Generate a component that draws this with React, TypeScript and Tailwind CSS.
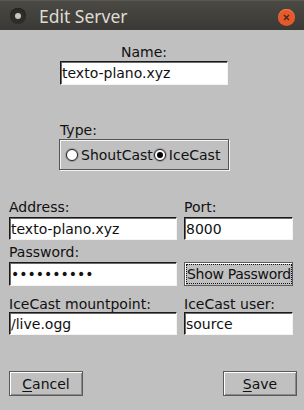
import React from "react";

const font = { fontFamily: '"DejaVu Sans", sans-serif' };

function Entry({ value, className = "" }: { value: string; className?: string }) {
  return (
    <div
      className={
        "flex items-center bg-white border border-t-[#1a1a1a] border-l-[#1a1a1a] border-r-[#f4f4f4] border-b-[#f4f4f4] shadow-[inset_1px_1px_0_#6a6a6a] pl-[1px] text-[14px] leading-[16px] text-[#111] overflow-hidden whitespace-nowrap " +
        className
      }
    >
      {value}
    </div>
  );
}

function Radio({ checked }: { checked: boolean }) {
  return (
    <span className="w-[12px] h-[12px] rounded-full bg-white border border-[#222] shadow-[0_0_0_1px_#9a9a9a] flex items-center justify-center shrink-0">
      {checked && <span className="w-[6px] h-[6px] rounded-full bg-black" />}
    </span>
  );
}

function Button({ children }: { children: React.ReactNode }) {
  return (
    <div className="w-[74px] h-[25px] flex items-center justify-center border border-[#5a5a5a] shadow-[inset_1px_1px_0_#ffffff,inset_-1px_-1px_0_#8a8a8a] text-[14px] leading-[16px] text-[#111]">
      {children}
    </div>
  );
}

export default function App() {
  return (
    <div className="w-[304px] h-[410px] bg-[#c0c0c0] flex flex-col overflow-hidden" style={font}>
      {/* Title bar */}
      <div className="h-[30px] shrink-0 bg-gradient-to-b from-[#4a4944] to-[#3a3935] border-t border-[#5a5954] flex items-center relative">
        <div className="ml-[10px] w-[16px] h-[16px] rounded-full bg-[#2e2d2a] shadow-[inset_0_1px_1px_#1f1e1c] flex items-center justify-center">
          <div className="w-[6px] h-[6px] rounded-full bg-[#c8c6c0]" />
        </div>
        <div
          className="ml-[13px] text-[#dfdbd2] text-[17.5px] leading-[20px]"
          style={{ fontFamily: '"Noto Sans", sans-serif' }}
        >
          Edit Server
        </div>
        <div className="absolute right-[9px] top-[8px] w-[17px] h-[17px] rounded-full bg-[#e8582a] shadow-[inset_0_1px_0_#f08050] flex items-center justify-center">
          <svg width="7" height="7" viewBox="0 0 7 7">
            <path d="M1 1L6 6M6 1L1 6" stroke="#3a2a22" strokeWidth="1.4" />
          </svg>
        </div>
      </div>

      {/* Body */}
      <div className="flex flex-col pt-[14px] text-[#111] text-[14px] leading-[16px]">
        <div className="ml-[60px] w-[168px] flex flex-col items-center">
          <div>Name:</div>
          <Entry value="texto-plano.xyz" className="mt-[1px] w-[168px] h-[24px]" />
        </div>

        <div className="ml-[59px] mt-[37px] flex flex-col">
          <div className="pl-[1px]">Type:</div>
          <div className="mt-[1px] w-[170px] h-[31px] border border-[#555] shadow-[1px_1px_0_#f4f4f4,inset_1px_1px_0_#f4f4f4] flex items-center pl-[6px]">
            <Radio checked={false} />
            <span className="ml-[3px]">ShoutCast</span>
            <span className="ml-[1px]">
              <Radio checked={true} />
            </span>
            <span className="ml-[3px]">IceCast</span>
          </div>
        </div>

        <div className="mt-[29px] pl-[9px] grid grid-cols-[168px_109px] gap-x-[7px]">
          <div>Address:</div>
          <div>Port:</div>
          <Entry value="texto-plano.xyz" className="mt-[2px] h-[23px]" />
          <Entry value="8000" className="mt-[2px] h-[23px]" />

          <div className="mt-[4px]">Password:</div>
          <div className="mt-[4px]" />
          <Entry value="••••••••••" className="mt-[2px] h-[24px]" />
          <div className="mt-[2px] h-[24px] border border-[#5a5a5a] shadow-[inset_1px_1px_0_#ffffff] p-[1px] flex">
            <div className="flex-1 border border-dotted border-[#111] flex items-center justify-center whitespace-nowrap overflow-visible tracking-[-0.3px]">
              Show Password
            </div>
          </div>

          <div className="mt-[10px]">IceCast mountpoint:</div>
          <div className="mt-[10px]">IceCast user:</div>
          <Entry value="/live.ogg" className="h-[23px]" />
          <Entry value="source" className="h-[23px]" />
        </div>

        <div className="mt-[36px] pl-[9px] pr-[7px] flex justify-between">
          <Button>
            <span className="underline underline-offset-2">C</span>ancel
          </Button>
          <Button>
            <span className="underline underline-offset-2">S</span>ave
          </Button>
        </div>
      </div>
    </div>
  );
}
